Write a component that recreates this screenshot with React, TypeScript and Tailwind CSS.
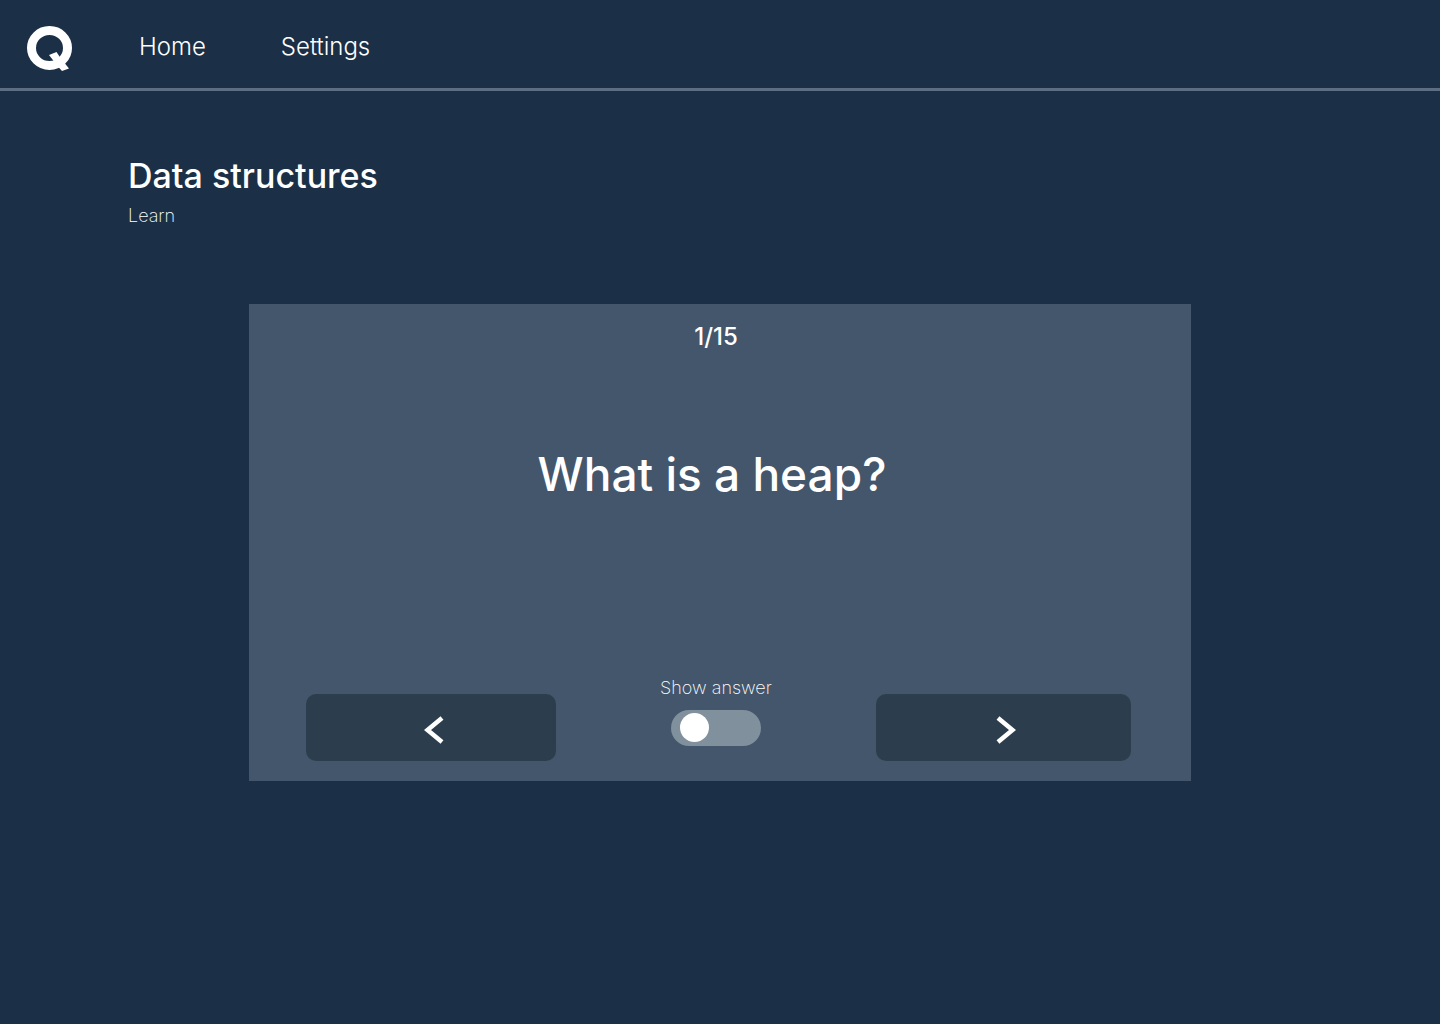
import { useState } from "react";

const TOTAL = 15;

function Logo() {
  return (
    <svg width="46" height="46" viewBox="0 0 46 46" fill="none" aria-hidden="true">
      <ellipse cx="23.5" cy="22" rx="18" ry="17.5" stroke="white" strokeWidth="9" />
      <path d="M23 29 30.5 26 34.5 32 43 42.5 36 45 31.5 40Z" fill="white" />
    </svg>
  );
}

function Chevron({ d }: { d: string }) {
  return (
    <svg width="20" height="28" viewBox="0 0 20 28" fill="none" stroke="white" strokeWidth="4.5" aria-hidden="true">
      <path d={d} />
    </svg>
  );
}

export default function App() {
  const [index, setIndex] = useState(1);
  const [shown, setShown] = useState(false);

  return (
    <div className="min-h-screen bg-[#1b3047] font-['Inter',sans-serif] text-white">
      <header className="flex h-[91px] items-center border-b-3 border-[#5b6e84] px-[26px] pt-[10px]">
        <a href="#home" aria-label="Q">
          <Logo />
        </a>
        <nav className="ml-[67px] flex items-center gap-[75px] pb-1 text-[24px] leading-8 font-light">
          <a href="#home">Home</a>
          <a href="#settings">Settings</a>
        </nav>
      </header>

      <main className="px-32 pt-[65px]">
        <h1 className="text-[34px] leading-10 font-medium">Data structures</h1>
        <p className="mt-1 text-[18px] leading-8 font-extralight">Learn</p>

        <section className="mx-auto mt-[72px] flex min-h-[477px] max-w-[942px] flex-col bg-[#43566b] pt-[17px] pb-5">
          <p className="pr-2 text-center text-2xl leading-8 font-medium">
            {index}/{TOTAL}
          </p>
          <h2 className="mt-[89px] pr-4 text-center text-[46px] leading-[64px] font-medium">What is a heap?</h2>
          <div className="mt-auto flex items-end justify-between pr-[60px] pl-[57px]">
            <button
              type="button"
              aria-label="Previous card"
              className="flex h-[67px] w-[250px] items-center justify-center rounded-[10px] bg-[#2c3e4e] pt-1 pl-[5px]"
              onClick={() => setIndex(Math.max(1, index - 1))}
            >
              <Chevron d="M18 2 3.5 14 18 26" />
            </button>
            <div className="mb-[15px] flex flex-col items-center">
              <label htmlFor="answer" className="text-[18px] leading-8 font-extralight">
                Show answer
              </label>
              <input
                id="answer"
                type="checkbox"
                role="switch"
                checked={shown}
                onChange={(e) => setShown(e.target.checked)}
                className="mt-[6px] flex h-9 w-[90px] appearance-none items-center rounded-full bg-[#80909c] px-[9px] pb-px before:size-[29px] before:rounded-full before:bg-white checked:justify-end"
              />
            </div>
            <button
              type="button"
              aria-label="Next card"
              className="flex h-[67px] w-[255px] items-center justify-center rounded-[10px] bg-[#2c3e4e] pt-1 pl-[5px]"
              onClick={() => setIndex(Math.min(TOTAL, index + 1))}
            >
              <Chevron d="M2 2 16.5 14 2 26" />
            </button>
          </div>
        </section>
      </main>
    </div>
  );
}
